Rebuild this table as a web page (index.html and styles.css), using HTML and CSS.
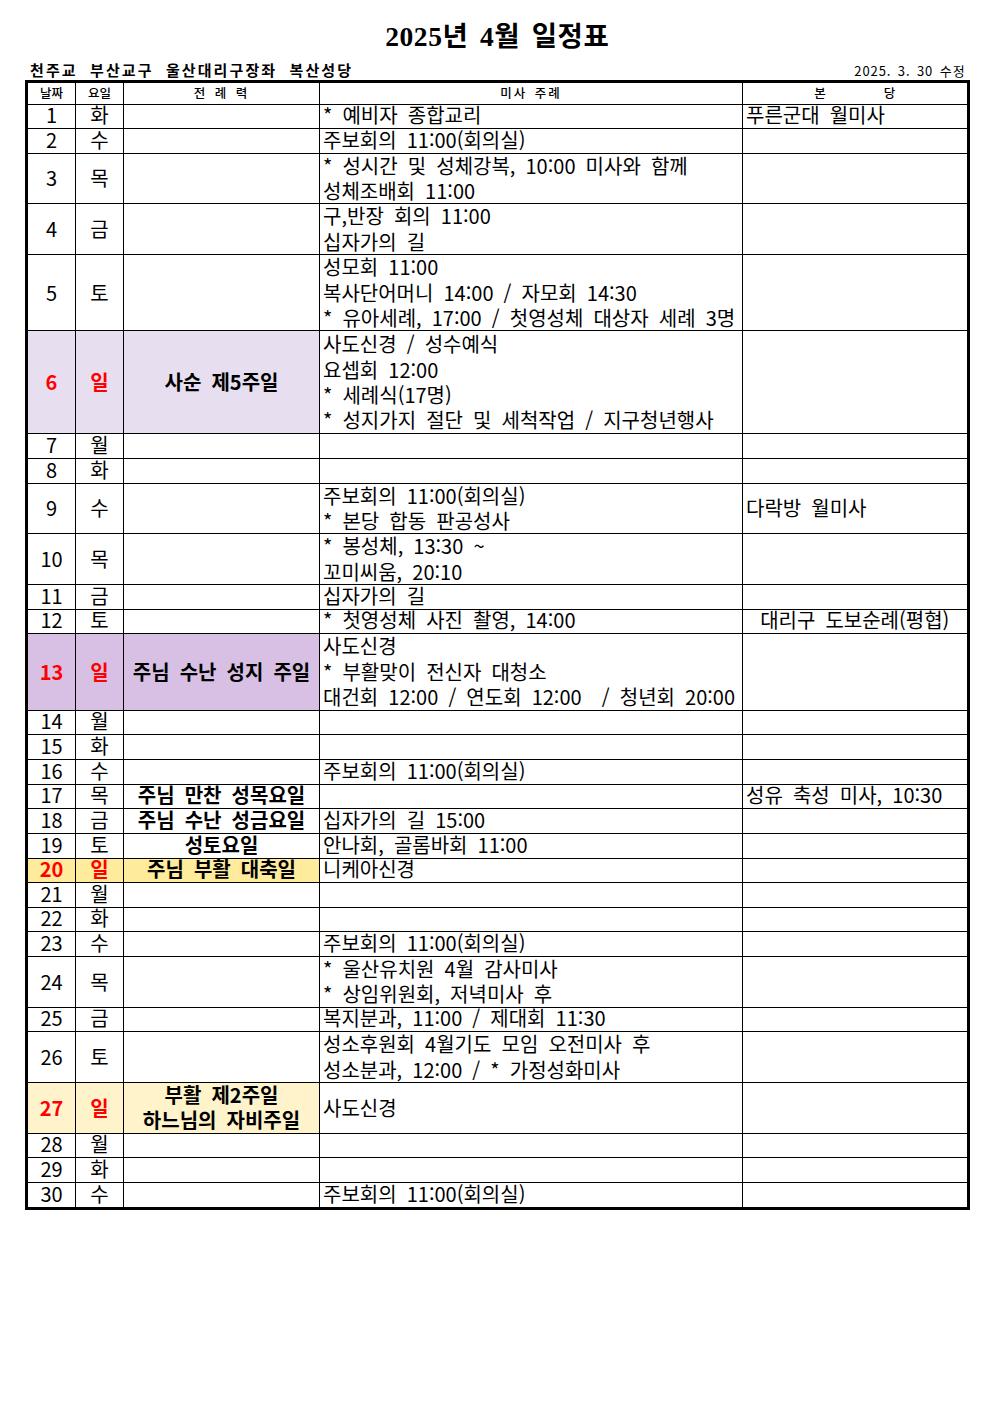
FILE: index.html
```html
<!DOCTYPE html>
<html lang="ko">
<head>
<meta charset="utf-8">
<title>2025년 4월 일정표</title>
<link rel="stylesheet" href="styles.css">
</head>
<body>
<div class="page">
  <h1 class="title">2025년 4월 일정표</h1>
  <div class="subhead">
    <span class="parish">천주교 부산교구 울산대리구장좌 복산성당</span>
    <span class="revised">2025. 3. 30 수정</span>
  </div>
  <div class="sched">
    <div class="row head">
      <div class="c">날짜</div>
      <div class="c">요일</div>
      <div class="c sp">전 례 력</div>
      <div class="c sp">미사 주례</div>
      <div class="c split"><span>본</span><span>당</span></div>
    </div>

    <div class="row h1"><div class="c">1</div><div class="c">화</div><div class="c"></div><div class="l">* 예비자 종합교리</div><div class="l">푸른군대 월미사</div></div>
    <div class="row h1"><div class="c">2</div><div class="c">수</div><div class="c"></div><div class="l">주보회의 11:00(회의실)</div><div class="l"></div></div>
    <div class="row h2"><div class="c">3</div><div class="c">목</div><div class="c"></div><div class="l"><p>* 성시간 및 성체강복, 10:00 미사와 함께</p><p>성체조배회 11:00</p></div><div class="l"></div></div>
    <div class="row h2"><div class="c">4</div><div class="c">금</div><div class="c"></div><div class="l"><p>구,반장 회의 11:00</p><p>십자가의 길</p></div><div class="l"></div></div>
    <div class="row h3"><div class="c">5</div><div class="c">토</div><div class="c"></div><div class="l"><p>성모회 11:00</p><p>복사단어머니 14:00 / 자모회 14:30</p><p>* 유아세례, 17:00 / 첫영성체 대상자 세례 3명</p></div><div class="l"></div></div>
    <div class="row h4 lent"><div class="c sun">6</div><div class="c sun">일</div><div class="c lit">사순 제5주일</div><div class="l"><p>사도신경 / 성수예식</p><p>요셉회 12:00</p><p>* 세례식(17명)</p><p>* 성지가지 절단 및 세척작업 / 지구청년행사</p></div><div class="l"></div></div>
    <div class="row h1"><div class="c">7</div><div class="c">월</div><div class="c"></div><div class="l"></div><div class="l"></div></div>
    <div class="row h1"><div class="c">8</div><div class="c">화</div><div class="c"></div><div class="l"></div><div class="l"></div></div>
    <div class="row h2"><div class="c">9</div><div class="c">수</div><div class="c"></div><div class="l"><p>주보회의 11:00(회의실)</p><p>* 본당 합동 판공성사</p></div><div class="l">다락방 월미사</div></div>
    <div class="row h2"><div class="c">10</div><div class="c">목</div><div class="c"></div><div class="l"><p>* 봉성체, 13:30 ~</p><p>꼬미씨움, 20:10</p></div><div class="l"></div></div>
    <div class="row h1"><div class="c">11</div><div class="c">금</div><div class="c"></div><div class="l">십자가의 길</div><div class="l"></div></div>
    <div class="row h1"><div class="c">12</div><div class="c">토</div><div class="c"></div><div class="l">* 첫영성체 사진 촬영, 14:00</div><div class="c">대리구 도보순례(평협)</div></div>
    <div class="row h3 palm"><div class="c sun">13</div><div class="c sun">일</div><div class="c lit">주님 수난 성지 주일</div><div class="l"><p>사도신경</p><p>* 부활맞이 전신자 대청소</p><p>대건회 12:00 / 연도회 12:00 &nbsp;/ 청년회 20:00</p></div><div class="l"></div></div>
    <div class="row h1"><div class="c">14</div><div class="c">월</div><div class="c"></div><div class="l"></div><div class="l"></div></div>
    <div class="row h1"><div class="c">15</div><div class="c">화</div><div class="c"></div><div class="l"></div><div class="l"></div></div>
    <div class="row h1"><div class="c">16</div><div class="c">수</div><div class="c"></div><div class="l">주보회의 11:00(회의실)</div><div class="l"></div></div>
    <div class="row h1"><div class="c">17</div><div class="c">목</div><div class="c lit">주님 만찬 성목요일</div><div class="l"></div><div class="l">성유 축성 미사, 10:30</div></div>
    <div class="row h1"><div class="c">18</div><div class="c">금</div><div class="c lit">주님 수난 성금요일</div><div class="l">십자가의 길 15:00</div><div class="l"></div></div>
    <div class="row h1"><div class="c">19</div><div class="c">토</div><div class="c lit">성토요일</div><div class="l">안나회, 골롬바회 11:00</div><div class="l"></div></div>
    <div class="row h1 easter"><div class="c sun">20</div><div class="c sun">일</div><div class="c lit">주님 부활 대축일</div><div class="l">니케아신경</div><div class="l"></div></div>
    <div class="row h1"><div class="c">21</div><div class="c">월</div><div class="c"></div><div class="l"></div><div class="l"></div></div>
    <div class="row h1"><div class="c">22</div><div class="c">화</div><div class="c"></div><div class="l"></div><div class="l"></div></div>
    <div class="row h1"><div class="c">23</div><div class="c">수</div><div class="c"></div><div class="l">주보회의 11:00(회의실)</div><div class="l"></div></div>
    <div class="row h2"><div class="c">24</div><div class="c">목</div><div class="c"></div><div class="l"><p>* 울산유치원 4월 감사미사</p><p>* 상임위원회, 저녁미사 후</p></div><div class="l"></div></div>
    <div class="row h1"><div class="c">25</div><div class="c">금</div><div class="c"></div><div class="l">복지분과, 11:00 / 제대회 11:30</div><div class="l"></div></div>
    <div class="row h2"><div class="c">26</div><div class="c">토</div><div class="c"></div><div class="l"><p>성소후원회 4월기도 모임 오전미사 후</p><p>성소분과, 12:00 / * 가정성화미사</p></div><div class="l"></div></div>
    <div class="row h2 mercy"><div class="c sun">27</div><div class="c sun">일</div><div class="c lit"><p>부활 제2주일</p><p>하느님의 자비주일</p></div><div class="l">사도신경</div><div class="l"></div></div>
    <div class="row h1"><div class="c">28</div><div class="c">월</div><div class="c"></div><div class="l"></div><div class="l"></div></div>
    <div class="row h1"><div class="c">29</div><div class="c">화</div><div class="c"></div><div class="l"></div><div class="l"></div></div>
    <div class="row h1 last"><div class="c">30</div><div class="c">수</div><div class="c"></div><div class="l">주보회의 11:00(회의실)</div><div class="l"></div></div>
  </div>
</div>
</body>
</html>
```

FILE: styles.css
```css
* { box-sizing: border-box; }
html, body { margin: 0; padding: 0; background: #fff; }
body {
  font-family: "Noto Sans CJK KR", "Noto Sans", sans-serif;
  color: #000;
}
.page {
  width: 992px;
  padding: 21px 0 0 25px;
}
.title {
  margin: 0;
  width: 944.5px;
  height: 32px;
  text-align: center;
  font-family: "Liberation Serif", "Noto Sans CJK KR", serif;
  font-size: 27.5px;
  font-weight: 700;
  line-height: 32px;
  letter-spacing: 0.6px;
  word-spacing: 4px;
}
.subhead {
  width: 944.5px;
  height: 26.5px;
  display: flex;
  justify-content: space-between;
  align-items: flex-end;
  padding: 0 4px 1px 5px;
}
.parish {
  font-size: 15px;
  font-weight: 700;
  line-height: 18px;
  letter-spacing: 2.1px;
  word-spacing: 6px;
}
.revised {
  font-size: 13px;
  line-height: 16px;
  letter-spacing: 0.9px;
  word-spacing: 2px;
}
.sched {
  width: 944.5px;
  border: 3px solid #000;
}
.row {
  display: grid;
  grid-template-columns: 48px 48px 196px 423px 1fr;
  grid-template-rows: minmax(0, 1fr);
  border-bottom: 1px solid #000;
  font-size: 20px;
  line-height: 25.4px;
  word-spacing: 4.5px;
}
.row > div {
  border-right: 1px solid #000;
  display: flex;
  flex-direction: column;
  justify-content: center;
  white-space: nowrap;
  overflow: visible;
  min-width: 0;
  min-height: 0;
  padding-bottom: 1px;
}
.row > div:last-child { border-right: none; }
.row p { margin: 0; }
.c { align-items: center; text-align: center; }
.l { align-items: flex-start; padding-left: 3px; }

.head {
  height: 22px;
  font-size: 12.5px;
  line-height: 16px;
  font-weight: 500;
}
.head > div { padding-bottom: 1px; }
.head .sp { letter-spacing: 2px; word-spacing: 2px; }
.head .split {
  flex-direction: row;
  justify-content: center;
  align-items: center;
  gap: 58px;
}

.h1 { height: 24.65px; line-height: 22px; }
.h1 > div { padding-bottom: 2.5px; }
.h2 { height: 50.6px; }
.h3 { height: 76.5px; }
.h4 { height: 103px; }
.last { border-bottom: none; }

.sun { color: #ff0000; font-weight: 700; }
.lit { font-weight: 700; }

.lent > div:nth-child(-n+3) { background: #e7def0; }
.palm > div:nth-child(-n+3) { background: #d8c0e4; }
.easter > div:nth-child(-n+3) { background: #ffeb9c; }
.mercy > div:nth-child(-n+3) { background: #fff3cc; }
```
